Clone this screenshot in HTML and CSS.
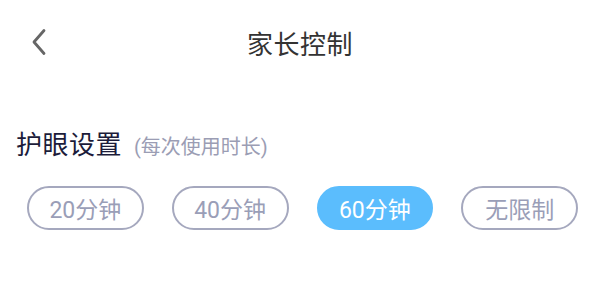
FILE: index.html
```html
<!DOCTYPE html>
<html lang="zh">
<head>
<meta charset="utf-8">
<link rel="stylesheet" href="styles.css">
</head>
<body>
<div class="page">
  <header class="header">
    <span class="back">
      <svg width="18" height="28" viewBox="0 0 18 28"><path d="M14 2.5 L4 14 L14 25.5" fill="none" stroke="#666" stroke-width="2.8" stroke-linecap="round" stroke-linejoin="round"/></svg>
    </span>
    <h1 class="title">家长控制</h1>
  </header>
  <section class="section">
    <div class="section-head">
      <span class="section-title">护眼设置</span>
      <span class="section-sub">(每次使用时长)</span>
    </div>
    <div class="options">
      <div class="opt">20分钟</div>
      <div class="opt">40分钟</div>
      <div class="opt active">60分钟</div>
      <div class="opt">无限制</div>
    </div>
  </section>
</div>
</body>
</html>
```
FILE: styles.css
```css
* { box-sizing: border-box; }
html, body { margin: 0; padding: 0; background: #fff; }
body { font-family: Roboto, "Noto Sans CJK SC", sans-serif; width: 600px; height: 300px; overflow: hidden; }
.header { position: relative; height: 84px; display: flex; align-items: center; justify-content: center; }
.back { position: absolute; left: 30px; top: 28px; display: flex; }
.title { margin: 0; font-weight: 400; font-size: 26px; color: #333; letter-spacing: 0.5px; }
.section { padding: 0 22px 0 27px; }
.section-head { display: flex; align-items: baseline; margin-left: -11px; margin-top: 40px; }
.section-title { font-size: 26px; color: #1c1c3a; letter-spacing: 0.5px; }
.section-sub { font-size: 20px; color: #9b9db4; margin-left: 12px; }
.options { display: flex; gap: 28px; margin-top: 25px; }
.opt { width: 117px; height: 44px; border: 2px solid #a5a8be; border-radius: 22px; display: flex; align-items: center; justify-content: center; font-size: 23px; color: #9a9eb7; }
.opt.active { background: #5bbdfd; border-color: #5bbdfd; color: #fff; }
```
